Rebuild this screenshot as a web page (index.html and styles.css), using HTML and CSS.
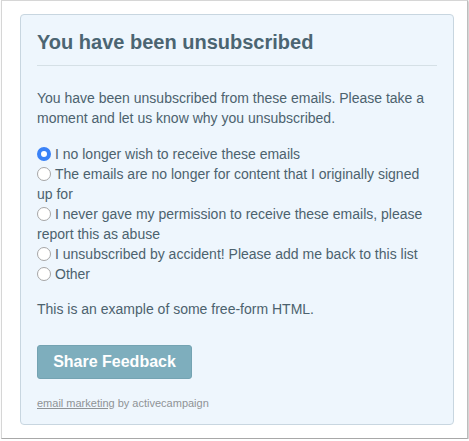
FILE: index.html
```html
<!DOCTYPE html>
<html>
<head>
<meta charset="utf-8">
<link rel="stylesheet" href="styles.css">
</head>
<body>
<div class="frame">
  <div class="card">
    <h1 class="title">You have been unsubscribed</h1>
    <hr class="rule">
    <p class="intro">You have been unsubscribed from these emails. Please take a moment and let us know why you unsubscribed.</p>
    <div class="options">
      <label class="option"><span class="radio checked"></span>I no longer wish to receive these emails</label>
      <label class="option"><span class="radio"></span>The emails are no longer for content that I originally signed up for</label>
      <label class="option"><span class="radio"></span>I never gave my permission to receive these emails, please report this as abuse</label>
      <label class="option"><span class="radio"></span>I unsubscribed by accident! Please add me back to this list</label>
      <label class="option"><span class="radio"></span>Other</label>
    </div>
    <p class="free">This is an example of some free-form HTML.</p>
    <button class="share">Share Feedback</button>
    <p class="footer"><a class="footer-link" href="#">email marketing</a> by activecampaign</p>
  </div>
</div>
</body>
</html>
```
FILE: styles.css
```css
html, body {
  margin: 0;
  padding: 0;
  background: #ffffff;
}
body {
  font-family: "Liberation Sans", Arial, sans-serif;
}
.frame {
  box-sizing: border-box;
  margin-left: 1px;
  width: 467px;
  height: 439px;
  border: 1px solid #d6d6d6;
  border-right-color: #bdbdbd;
  border-bottom-color: #a8a8a8;
  box-shadow: 1px 1px 2px rgba(0,0,0,0.25);
  padding: 13px 0 0 18px;
  background: #ffffff;
}
.card {
  box-sizing: border-box;
  width: 434px;
  height: 411px;
  background: #eef6fd;
  border: 1px solid #c8d6e0;
  border-radius: 4px;
  padding: 15px 16px 0 16px;
  color: #4c626e;
}
.title {
  margin: 0;
  font-size: 20px;
  line-height: 24px;
  font-weight: bold;
  color: #4b6572;
}
.rule {
  margin: 11px 0 0 0;
  border: 0;
  height: 1px;
  background: #d5e0e6;
}
.intro {
  margin: 22px 0 0 0;
  font-size: 14px;
  line-height: 20px;
}
.options {
  margin-top: 16px;
  display: flex;
  flex-direction: column;
  font-size: 14px;
  line-height: 20px;
}
.option {
  display: block;
}
.radio {
  display: inline-block;
  box-sizing: border-box;
  width: 14px;
  height: 14px;
  border-radius: 50%;
  border: 1px solid #a6a6a6;
  background: #ffffff;
  vertical-align: -2px;
  margin-right: 4px;
}
.radio.checked {
  border: 4px solid #3a82f7;
  background: #ffffff;
}
.free {
  margin: 15px 0 0 0;
  font-size: 14px;
  line-height: 20px;
}
.share {
  display: block;
  margin-top: 26px;
  width: 155px;
  height: 34px;
  background: #7eaebd;
  border: 1px solid #74a3b2;
  border-radius: 3px;
  color: #ffffff;
  font-family: "Liberation Sans", Arial, sans-serif;
  font-weight: bold;
  font-size: 16px;
  padding: 0;
}
.footer {
  margin: 17px 0 0 0;
  font-size: 11px;
  line-height: 14px;
  color: #8f9396;
}
.footer-link {
  color: #8f9396;
  text-decoration: underline;
}
```
